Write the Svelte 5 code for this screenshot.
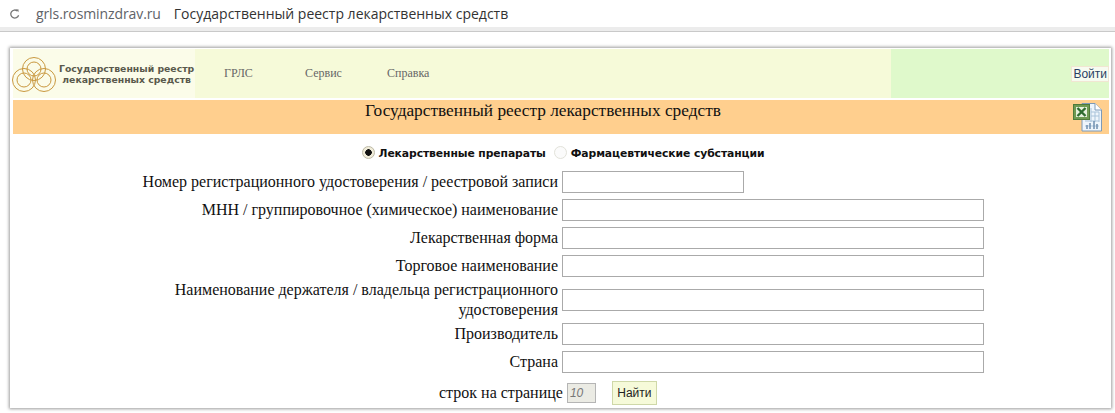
<script>
	const fields = [
		{ label: 'Номер регистрационного удостоверения / реестровой записи', short: true },
		{ label: 'МНН / группировочное (химическое) наименование' },
		{ label: 'Лекарственная форма' },
		{ label: 'Торговое наименование' },
		{ label: 'Наименование держателя / владельца регистрационного удостоверения', tall: true },
		{ label: 'Производитель' },
		{ label: 'Страна' }
	];
</script>

<div class="page">
	<div class="browser">
		<svg class="reload" viewBox="0 0 12 12" width="12" height="12">
			<path d="M9.6 7.2A4 4 0 1 1 8.4 3" fill="none" stroke="#777" stroke-width="1.3" />
			<path d="M7 1.2 L9.6 1.4 L9.4 4.2 Z" fill="#777" />
		</svg>
		<span class="host">grls.rosminzdrav.ru</span>
		<span class="tab-title">Государственный реестр лекарственных средств</span>
	</div>
	<div class="rule"></div>

	<div class="panel">
		<header class="top">
			<div class="brand">
				<svg class="logo" viewBox="0 0 46 36" width="46" height="36">
					<g fill="none" stroke="#c9983f" stroke-width="1">
						<circle cx="23" cy="13" r="11.5" />
						<circle cx="23" cy="13" r="7" />
						<circle cx="13" cy="24" r="11.5" />
						<circle cx="13" cy="24" r="7" />
						<circle cx="33" cy="24" r="11.5" />
						<circle cx="33" cy="24" r="7" />
					</g>
				</svg>
				<div class="brand-text">Государственный реестр<br />лекарственных средств</div>
			</div>
			<nav class="nav">
				<span class="grls">ГРЛС</span>
				<span class="service">Сервис</span>
				<span>Справка</span>
			</nav>
			<div class="login-area"><span class="login">Войти</span></div>
		</header>

		<div class="band">
			<h1>Государственный реестр лекарственных средств</h1>
			<svg class="excel" viewBox="0 0 30 30" width="30" height="30">
				<path d="M9 1.5H22L28.5 8V29H9Z" fill="#eef5fb" stroke="#7d9ab8" />
				<path d="M22 1.5V8H28.5" fill="#fff" stroke="#7d9ab8" />
				<path d="M18 10H26M18 14H26M12 19H26M12 24H26M18 6V20M22 10V20M26 10V20" stroke="#a9c3da" fill="none" />
				<path d="M14 27V23M17 27V21M21 27V19M24 27V22" stroke="#6f8fb0" stroke-width="1.5" fill="none" />
				<rect x="0.5" y="2.5" width="16" height="15" fill="#6f9a52" stroke="#4f7a3a" />
				<rect x="3" y="5" width="11" height="10" fill="#e7f1dc" />
				<path d="M4.5 6L12.5 14M12.5 6L4.5 14" stroke="#2f6b2f" stroke-width="2.4" />
			</svg>
		</div>

		<div class="kinds">
			<label class="kind">
				<span class="radio on"></span>Лекарственные препараты
			</label>
			<label class="kind">
				<span class="radio"></span>Фармацевтические субстанции
			</label>
		</div>

		<form class="form">
			{#each fields as field}
				<div class="row" class:tall={field.tall}>
					<span class="label">{field.label}</span>
					<input class="text" class:short={field.short} type="text" />
				</div>
			{/each}
			<div class="pager">
				<span class="pager-label">строк на странице</span>
				<input class="size" type="text" value="10" disabled />
				<button class="find" type="button">Найти</button>
			</div>
		</form>
	</div>
</div>

<style>
	:global(body) {
		background: #fff;
		overflow: hidden;
	}

	.page {
		width: 1115px;
		height: 413px;
		overflow: hidden;
		background: #fff;
	}

	.browser {
		display: flex;
		align-items: center;
		height: 27px;
		padding-left: 9px;
		font-family: 'Open Sans', 'Noto Sans', sans-serif;
		font-size: 14px;
		color: #3c3c3c;
		background: #fff;
	}

	.reload {
		margin-right: 15px;
	}

	.host {
		color: #5f6368;
		margin-right: 13px;
		letter-spacing: -0.1px;
	}

	.tab-title {
		color: #333;
	}

	.rule {
		height: 5px;
		background: #ececec;
		border-bottom: 1px solid #c9c9c9;
		box-sizing: border-box;
	}

	.panel {
		width: 1101px;
		height: 360px;
		margin: 16px 0 0 10px;
		box-sizing: border-box;
		background: #fff;
		padding: 1px 2px 0 3px;
		box-shadow: 0 0 3px 1px #9c9c9c;
		overflow: hidden;
	}

	.top {
		display: flex;
		height: 49px;
	}

	.brand {
		display: flex;
		align-items: center;
		width: 182px;
		background: #fbfce9;
	}

	.logo {
		flex: none;
		margin-left: -2px;
	}

	.brand-text {
		font-family: 'DejaVu Sans', 'Noto Sans', sans-serif;
		font-size: 9.3px;
		line-height: 11px;
		font-weight: 700;
		color: #59594c;
		text-align: center;
		white-space: nowrap;
		margin-left: 2px;
	}

	.nav {
		display: flex;
		align-items: center;
		width: 696px;
		padding-left: 29px;
		box-sizing: border-box;
		background: #f6fad9;
		font-family: 'Liberation Serif', serif;
		font-size: 12px;
		color: #666;
	}

	.grls {
		width: 81px;
	}

	.service {
		width: 82px;
	}

	.login-area {
		flex: 1;
		display: flex;
		align-items: center;
		justify-content: flex-end;
		background: #dff9cb;
	}

	.login {
		font-family: 'Liberation Sans', sans-serif;
		font-size: 12px;
		line-height: 14px;
		color: #2a3f63;
		background: #f7fbf0;
		padding: 0 1px;
		border: 1px solid #f1e6d2;
	}

	.band {
		position: relative;
		height: 34px;
		margin-top: 2px;
		padding-right: 36px;
		background: #ffcf8e;
		text-align: center;
	}

	.band h1 {
		margin: 0;
		padding-top: 1px;
		font-family: 'Liberation Serif', serif;
		font-weight: 400;
		font-size: 17.3px;
		line-height: 19px;
		color: #111;
	}

	.excel {
		position: absolute;
		right: 6px;
		top: 2px;
	}

	.kinds {
		display: flex;
		justify-content: center;
		gap: 8px;
		height: 34px;
		padding: 12px 0 0 4px;
		box-sizing: border-box;
		font-family: 'DejaVu Sans', sans-serif;
		font-size: 10.8px;
		font-weight: 700;
		color: #111;
	}

	.kind {
		display: flex;
		height: 14px;
		line-height: 15px;
		letter-spacing: -0.1px;
	}

	.radio {
		display: block;
		width: 13px;
		height: 13px;
		margin: 0 4px 0 0;
		box-sizing: border-box;
		border: 1px solid #e2e2da;
		border-radius: 50%;
		background: #fbfbfb;
	}

	.radio.on {
		border-color: #bdb9a6;
		background: radial-gradient(circle, #111 0 3px, #f0ecd9 3.5px);
	}

	.form {
		display: flex;
		flex-direction: column;
		font-family: 'Liberation Serif', serif;
		font-size: 16px;
		color: #111;
	}

	.row {
		display: grid;
		grid-template-columns: 545px 422px;
		column-gap: 4px;
		align-items: center;
		height: 28px;
	}

	.row.tall {
		height: 40px;
	}

	.label {
		text-align: right;
		line-height: 18px;
		padding-left: 100px;
	}

	.row.tall .label {
		line-height: 20px;
	}

	.text {
		width: 422px;
		height: 22px;
		box-sizing: border-box;
		border: 1px solid #aaa;
		background: #fff;
		padding: 0;
	}

	.text.short {
		width: 182px;
	}

	.pager {
		display: flex;
		flex: none;
		align-items: center;
		height: 34px;
		padding-left: 426px;
	}

	.pager-label {
		margin-right: 4px;
		white-space: nowrap;
	}

	.size {
		width: 29px;
		height: 20px;
		box-sizing: border-box;
		border: 1px solid #b5b5b5;
		background: #ebebe4;
		padding: 0 2px;
		font-family: 'Liberation Sans', sans-serif;
		font-size: 12px;
		font-style: italic;
		color: #777;
	}

	.find {
		margin-left: 16px;
		width: 45px;
		height: 24px;
		box-sizing: border-box;
		border: 1px solid #cfd8a8;
		background: #f6fad9;
		padding: 0;
		font-family: 'Liberation Sans', sans-serif;
		font-size: 12px;
		color: #222;
	}
</style>
